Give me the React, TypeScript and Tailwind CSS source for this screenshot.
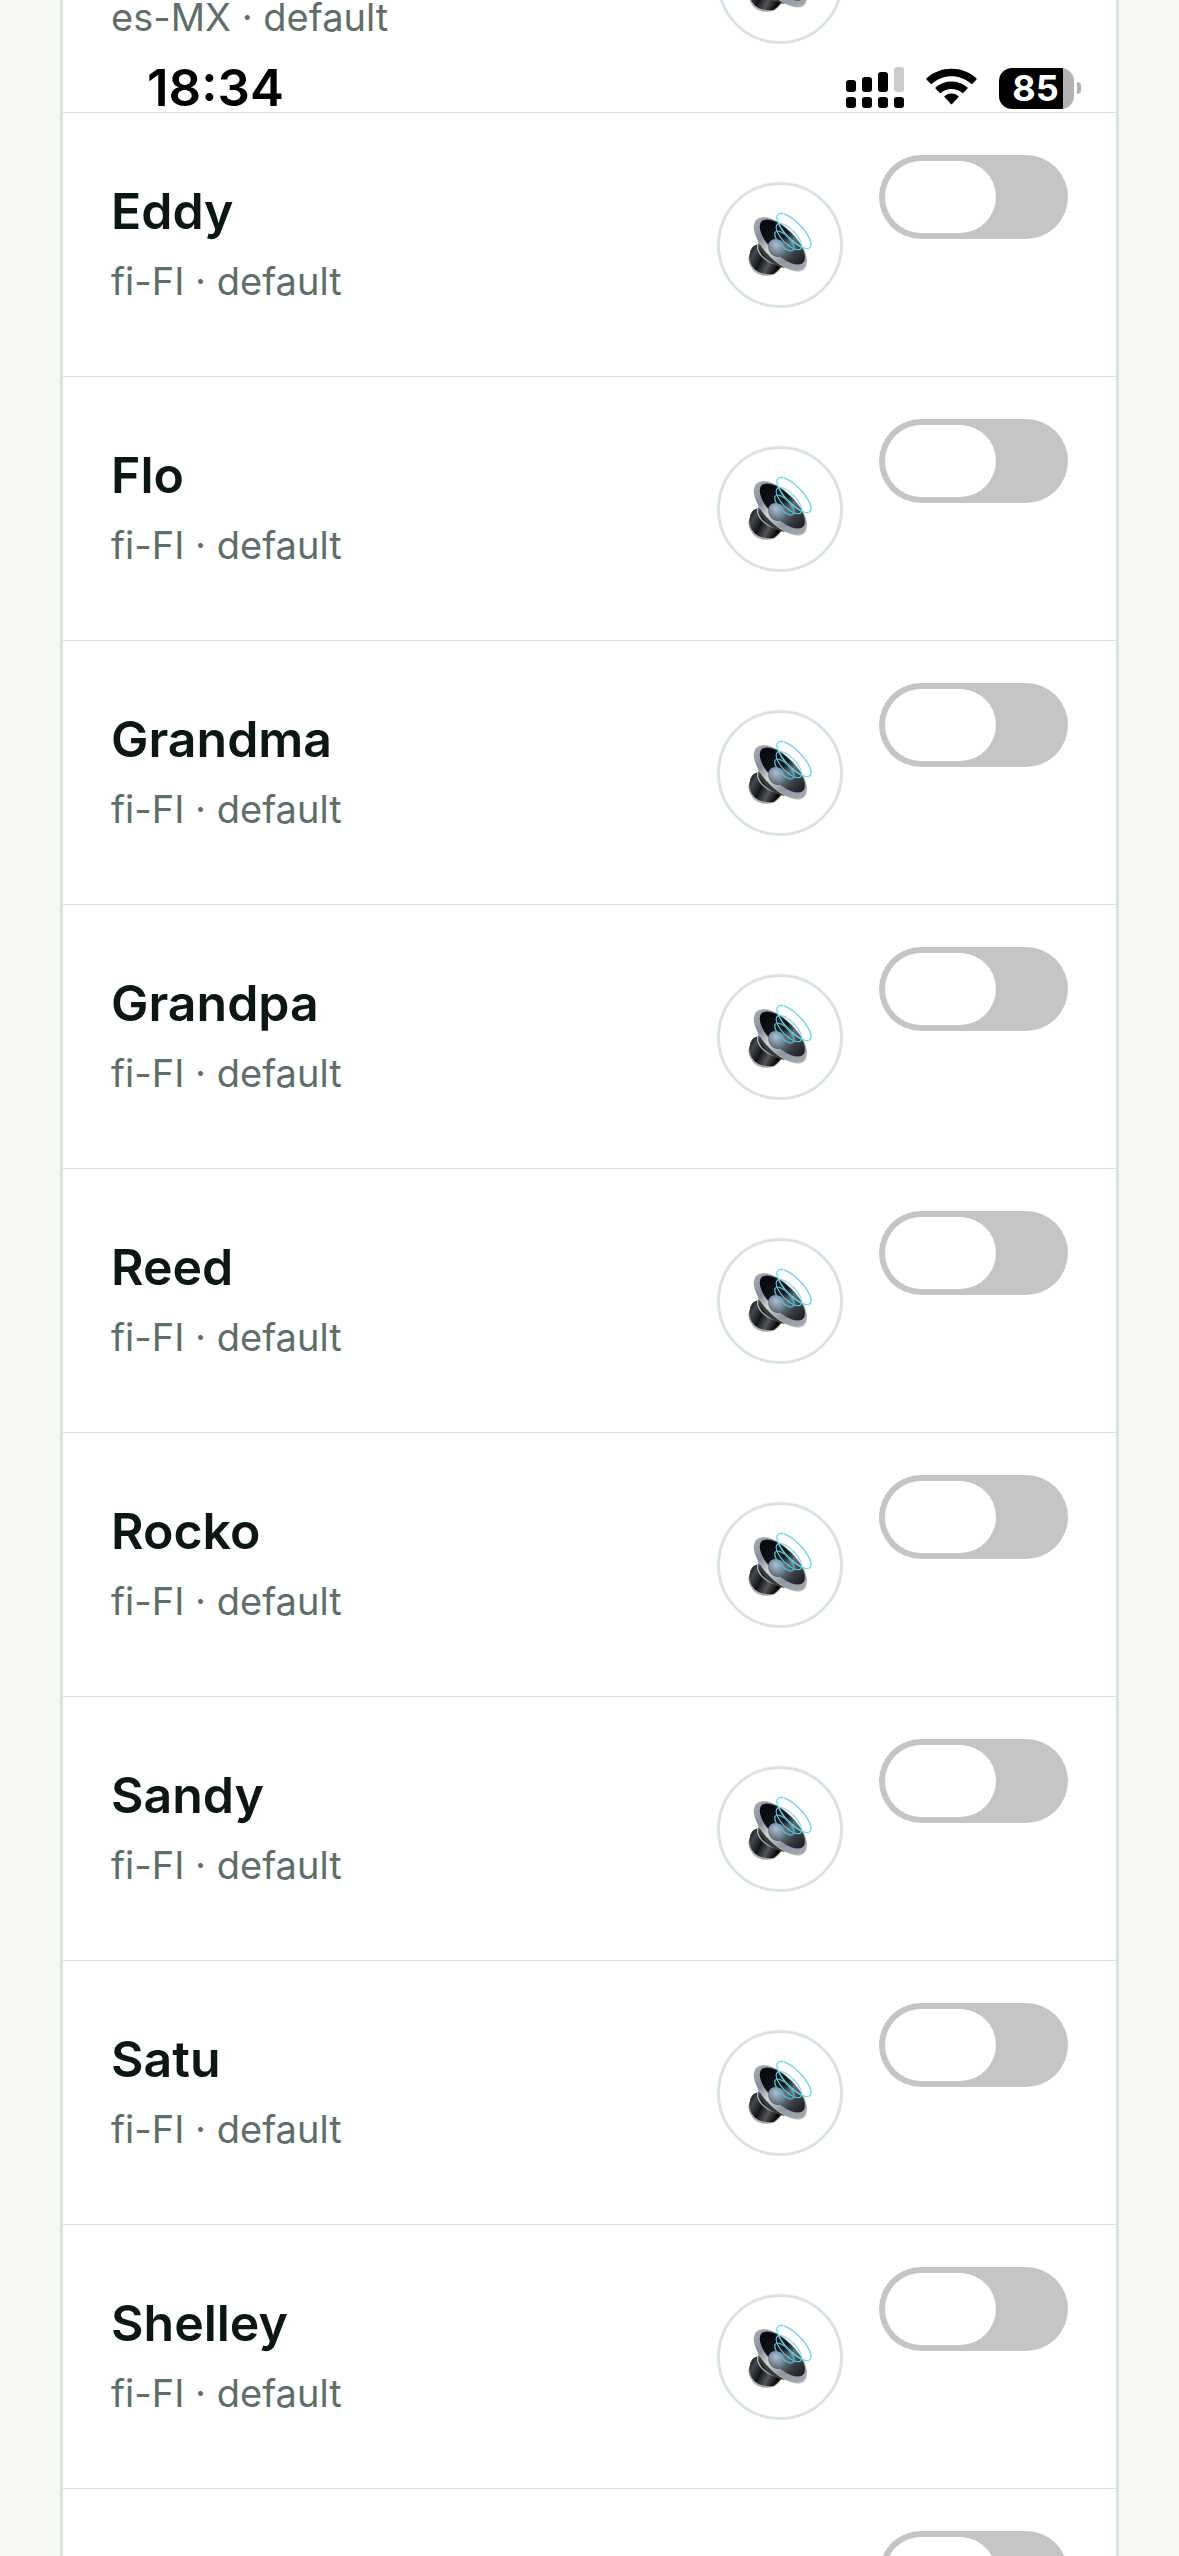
import { useId, useState } from "react";

type Voice = { name: string; locale: string };

const voices: Voice[] = [
  { name: "Shelley", locale: "es-MX" },
  { name: "Eddy", locale: "fi-FI" },
  { name: "Flo", locale: "fi-FI" },
  { name: "Grandma", locale: "fi-FI" },
  { name: "Grandpa", locale: "fi-FI" },
  { name: "Reed", locale: "fi-FI" },
  { name: "Rocko", locale: "fi-FI" },
  { name: "Sandy", locale: "fi-FI" },
  { name: "Satu", locale: "fi-FI" },
  { name: "Shelley", locale: "fi-FI" },
  { name: "Eddy", locale: "fr-CA" },
];

function SpeakerIcon() {
  const id = useId();
  return (
    <svg viewBox="0 0 360 360" className="size-full" aria-hidden="true">
      <defs>
        <linearGradient id={id + "rim"} x1="0" y1="0" x2="1" y2="0">
          <stop offset="0" stopColor="#a4abb6" />
          <stop offset="0.25" stopColor="#858e9c" />
          <stop offset="0.45" stopColor="#d3d9e0" />
          <stop offset="0.7" stopColor="#8f97a5" />
          <stop offset="1" stopColor="#a3a9b3" />
        </linearGradient>
        <linearGradient id={id + "cone"} x1="0" y1="0" x2="1" y2="0">
          <stop offset="0" stopColor="#050607" />
          <stop offset="0.45" stopColor="#15181b" />
          <stop offset="0.62" stopColor="#66727f" />
          <stop offset="0.78" stopColor="#3a3f45" />
          <stop offset="1" stopColor="#1b1d1f" />
        </linearGradient>
        <radialGradient id={id + "dome"} cx="0.35" cy="0.4" r="0.75">
          <stop offset="0" stopColor="#aebdce" />
          <stop offset="0.55" stopColor="#7b8b9d" />
          <stop offset="1" stopColor="#4a5664" />
        </radialGradient>
        <linearGradient id={id + "body"} x1="0" y1="0" x2="1" y2="0.5">
          <stop offset="0" stopColor="#0c0d0e" />
          <stop offset="0.25" stopColor="#43484d" />
          <stop offset="0.5" stopColor="#131415" />
          <stop offset="0.75" stopColor="#50565c" />
          <stop offset="1" stopColor="#0d0d0e" />
        </linearGradient>
        <linearGradient id={id + "neck"} x1="0" y1="0" x2="1" y2="0.5">
          <stop offset="0" stopColor="#d5d5d5" />
          <stop offset="0.3" stopColor="#3d3d3e" />
          <stop offset="0.6" stopColor="#8a8989" />
          <stop offset="1" stopColor="#b9b4b2" />
        </linearGradient>
      </defs>
      <path d="M118 162 L108 196 L180 250 L212 246 L246 258 Z" fill={`url(#${id}neck)`} />
      <path d="M92 198 C98 182 110 176 122 180 L184 242 C180 256 172 262 160 270 C144 274 122 274 106 262 C92 250 84 232 86 218 Z" fill="#aaa9ab" />
      <path d="M92 196 C98 182 110 176 122 180 L184 240 C182 252 172 258 162 266 C148 270 124 268 108 256 C94 244 86 226 88 212 Z" fill={`url(#${id}body)`} />
      <path d="M114 178 C108 196 128 234 182 240" fill="none" stroke="#b4b4b5" strokeWidth="4" />
      <path d="M128 182 C130 214 158 236 196 242" fill="none" stroke="#3a3a3b" strokeWidth="12" />
      <ellipse cx="181" cy="181" rx="101" ry="46" transform="rotate(45 181 181)" fill="#b9b5b4" />
      <ellipse cx="181" cy="176" rx="102" ry="48" transform="rotate(45 181 176)" fill={`url(#${id}rim)`} />
      <ellipse cx="187" cy="171" rx="88" ry="38" transform="rotate(45 187 171)" fill={`url(#${id}cone)`} />
      <ellipse cx="171" cy="189" rx="29" ry="25" transform="rotate(45 171 189)" fill={`url(#${id}dome)`} />
      <g fill="none" stroke="#6fd6e8">
        <ellipse cx="222" cy="138" rx="69" ry="25" transform="rotate(46 222 138)" strokeWidth="4" />
        <ellipse cx="207" cy="155" rx="51" ry="21" transform="rotate(46 207 155)" strokeWidth="3" />
        <ellipse cx="193" cy="168" rx="38" ry="16" transform="rotate(46 193 168)" strokeWidth="4" stroke="#4dbcd0" />
      </g>
    </svg>
  );
}

function VoiceRow({ voice }: { voice: Voice }) {
  const [on, setOn] = useState(false);
  const id = useId();
  return (
    <li className="flex h-[264px] items-center gap-9 border-t border-[#d9e4df] px-12">
      <label htmlFor={id} className="min-w-0 flex-1">
        <span className="block text-[50px] leading-[60px] font-semibold text-[#0b1714]">{voice.name}</span>
        <span className="block pt-3 text-[38px] leading-[56px] text-[#5e6f6a]">{voice.locale} · default</span>
      </label>
      <button
        type="button"
        aria-label={`Preview ${voice.name}`}
        className="size-[126px] shrink-0 rounded-full border-3 border-[#d9e4df] bg-white"
      >
        <SpeakerIcon />
      </button>
      <input
        id={id}
        type="checkbox"
        role="switch"
        checked={on}
        onChange={(e) => setOn(e.target.checked)}
        className="mt-[42px] h-[84px] w-[189px] shrink-0 appearance-none self-start rounded-full bg-[#c5c5c7] p-1.5 before:block before:h-[72px] before:w-[111px] before:rounded-full before:bg-white checked:bg-[#34c759] checked:before:translate-x-[66px]"
      />
    </li>
  );
}

function StatusBar() {
  return (
    <header className="absolute inset-x-0 top-0 flex items-center justify-between pt-[60px] pr-[98px] pl-[147px]">
      <time className="text-[51px] leading-[56px] font-semibold text-black">18:34</time>
      <div className="flex items-center gap-[22px]">
        <svg viewBox="0 0 58 42" className="h-[42px] w-[58px]" aria-label="Signal">
          <g fill="#000">
            <rect x="0" y="13" width="10" height="12" rx="3" />
            <rect x="16" y="10" width="10" height="15" rx="3" />
            <rect x="32" y="5" width="10" height="20" rx="3" />
            <rect x="0" y="30" width="10" height="11" rx="3" />
            <rect x="16" y="30" width="10" height="11" rx="3" />
            <rect x="32" y="30" width="10" height="11" rx="3" />
            <rect x="48" y="30" width="10" height="11" rx="3" />
          </g>
          <rect x="48" y="0" width="10" height="25" rx="3" fill="#ccc" />
        </svg>
        <svg viewBox="0 0 153 126" className="h-[42px] w-[51px]" aria-label="Wi-Fi">
          <path d="M2 38 Q0 36 2 34 C42 -4 111 -4 151 34 Q153 36 151 38 L139 50 Q137 52 135 50 C102 20 51 20 18 50 Q16 52 14 50 Z" />
          <path d="M29 65 Q27 63 29 61 C56 38 97 38 124 61 Q126 63 124 65 L112 77 Q110 79 108 77 C90 62 63 62 45 77 Q43 79 41 77 Z" />
          <path d="M56 91 Q54 89 56 87 C68 77 85 77 97 87 Q99 89 97 91 L79 110 Q76.500 113 74 110 Z" />
        </svg>
        <div className="flex items-center gap-[3px]">
          <div className="flex h-[41px] w-[75px] items-center justify-center overflow-hidden rounded-[13px] bg-linear-to-r from-black from-85% to-[#b2b2b2] to-85% pr-0.5 text-[36px] leading-[41px] font-bold text-white">
            85
          </div>
          <div className="h-3 w-1 rounded-r-full bg-[#b2b2b2]" />
        </div>
      </div>
    </header>
  );
}

export default function App() {
  return (
    <div className="relative h-screen overflow-hidden bg-[#f5f8f3] font-['Inter',sans-serif]">
      <main className="px-[60px]">
        <ul className="-mt-[152px] border-x-3 border-[#d9e4df] bg-white">
          {voices.map((v) => (
            <VoiceRow key={v.locale + v.name} voice={v} />
          ))}
        </ul>
      </main>
      <StatusBar />
    </div>
  );
}
